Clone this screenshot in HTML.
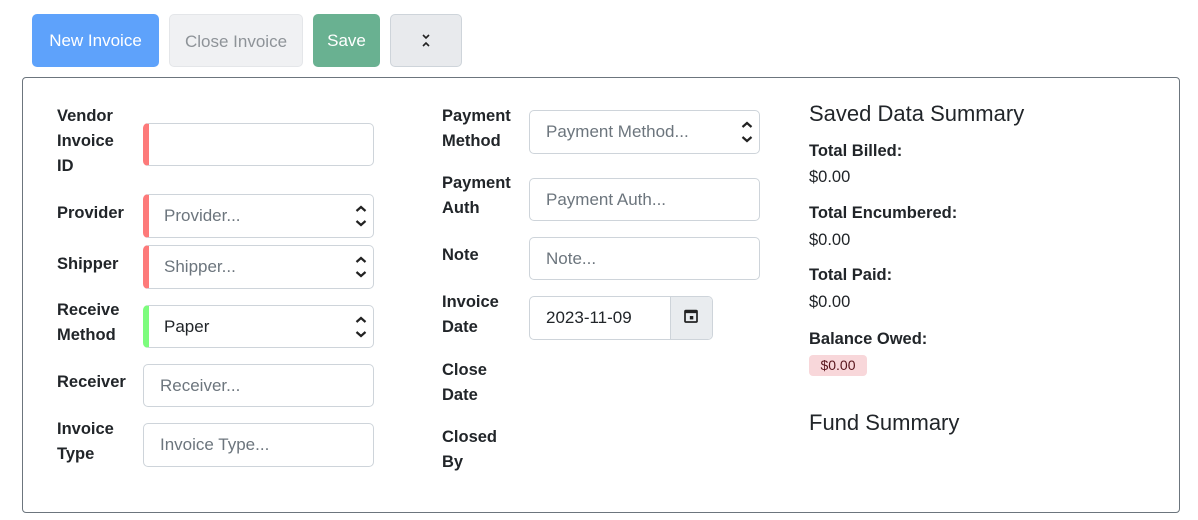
<!DOCTYPE html><html><head><style>
body{margin:0;width:1198px;height:520px;background:#fff;font-family:"Liberation Sans",sans-serif;color:#212529;position:relative;overflow:hidden}
.a{position:absolute}
.btn{position:absolute;top:14px;height:53px;border-radius:5px;font-size:17px;line-height:53px;text-align:center;box-sizing:border-box}
.card{position:absolute;left:22px;top:77px;width:1158px;height:436px;border:1px solid #6c757d;border-radius:4px;box-sizing:border-box}
.lb{position:absolute;font-weight:bold;font-size:16.5px;line-height:25px}
.in{position:absolute;border:1px solid #ced4da;border-radius:5px;box-sizing:border-box;font-size:17px;color:#6c757d;padding-left:16px;display:flex;align-items:center;background:#fff}
.red{border-left:6px solid #fd7a7a;padding-left:15px}
.grn{border-left:6px solid #7dfc7d;padding-left:15px;color:#212529}
.ar{position:absolute;right:6px;top:50%;transform:translateY(-50%);width:12px;height:28px}
.v{position:absolute;font-size:16.5px;line-height:20px}
</style></head><body>
<div class="btn" style="left:32px;width:127px;background:#5ea2fb;color:#fff">New Invoice</div>
<div class="btn" style="left:169px;width:134px;background:#f0f1f3;border:1px solid #e4e6e9;color:#8e9398">Close Invoice</div>
<div class="btn" style="left:313px;width:67px;background:#69b191;color:#fff">Save</div>
<div class="btn" style="left:390px;width:72px;background:#e8eaed;border:1px solid #ced4da"><svg width="12" height="16" viewBox="0 0 12 16" style="margin-top:18px"><path d="M3 2l3 3 3-3M3 13l3-3 3 3" stroke="#222" stroke-width="1.6" fill="none"/></svg></div>
<div class="card"></div>
<svg width="0" height="0" style="position:absolute"><defs><g id="ar"><path d="M1.5 9l4.5-4 4.5 4M1.5 19l4.5 4 4.5-4" stroke="#222" stroke-width="2.2" fill="none"/></g></defs></svg>
<div class="lb" style="left:57px;top:104px">Vendor<br>Invoice<br>ID</div>
<div class="in red" style="left:143px;top:123px;width:231px;height:43px"></div>
<div class="lb" style="left:57px;top:201px">Provider</div>
<div class="in red" style="left:143px;top:194px;width:231px;height:44px">Provider...<svg class="ar" viewBox="0 0 12 28"><use href="#ar"/></svg></div>
<div class="lb" style="left:57px;top:252px">Shipper</div>
<div class="in red" style="left:143px;top:245px;width:231px;height:44px">Shipper...<svg class="ar" viewBox="0 0 12 28"><use href="#ar"/></svg></div>
<div class="lb" style="left:57px;top:298px">Receive<br>Method</div>
<div class="in grn" style="left:143px;top:305px;width:231px;height:43px">Paper<svg class="ar" viewBox="0 0 12 28"><use href="#ar"/></svg></div>
<div class="lb" style="left:57px;top:370px">Receiver</div>
<div class="in" style="left:143px;top:364px;width:231px;height:43px">Receiver...</div>
<div class="lb" style="left:57px;top:417px">Invoice<br>Type</div>
<div class="in" style="left:143px;top:423px;width:231px;height:44px">Invoice Type...</div>
<div class="lb" style="left:442px;top:104px">Payment<br>Method</div>
<div class="in" style="left:529px;top:110px;width:231px;height:44px">Payment Method...<svg class="ar" viewBox="0 0 12 28"><use href="#ar"/></svg></div>
<div class="lb" style="left:442px;top:171px">Payment<br>Auth</div>
<div class="in" style="left:529px;top:178px;width:231px;height:43px">Payment Auth...</div>
<div class="lb" style="left:442px;top:243px">Note</div>
<div class="in" style="left:529px;top:237px;width:231px;height:43px">Note...</div>
<div class="lb" style="left:442px;top:290px">Invoice<br>Date</div>
<div class="in" style="left:529px;top:296px;width:184px;height:44px;color:#212529;overflow:hidden">2023-11-09<div style="position:absolute;right:0;top:0;width:41px;height:42px;background:#e9ecef;border-left:1px solid #ced4da"><svg width="16" height="16" viewBox="0 0 14 14" style="position:absolute;left:12px;top:11px"><rect x="1" y="1.5" width="12" height="11.5" rx="1.5" fill="#222"/><rect x="2.5" y="4.5" width="9" height="7" fill="#e9ecef"/><rect x="6" y="7" width="3" height="3" fill="#222"/></svg></div></div>
<div class="lb" style="left:442px;top:358px">Close<br>Date</div>
<div class="lb" style="left:442px;top:425px">Closed<br>By</div>
<div class="a" style="left:809px;top:100px;font-size:22px;line-height:28px">Saved Data Summary</div>
<div class="lb" style="left:809px;top:139px">Total Billed:</div>
<div class="v" style="left:809px;top:167px">$0.00</div>
<div class="lb" style="left:809px;top:201px">Total Encumbered:</div>
<div class="v" style="left:809px;top:230px">$0.00</div>
<div class="lb" style="left:809px;top:263px">Total Paid:</div>
<div class="v" style="left:809px;top:292px">$0.00</div>
<div class="lb" style="left:809px;top:327px">Balance Owed:</div>
<div class="a" style="left:809px;top:355px;width:58px;height:21px;background:#f8d7da;border-radius:4px;font-size:14px;line-height:21px;text-align:center;color:#58151c">$0.00</div>
<div class="a" style="left:809px;top:409px;font-size:22px;line-height:28px">Fund Summary</div>
</body></html>
